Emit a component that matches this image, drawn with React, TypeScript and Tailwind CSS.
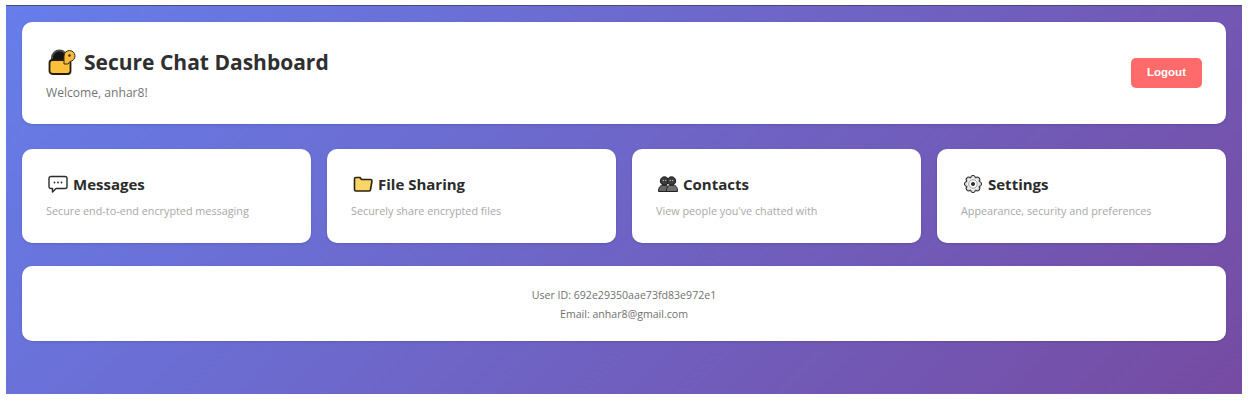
import React from 'react';

function LockIcon() {
  return (
    <svg width="28" height="28" viewBox="0 0 28 28" className="ml-[2px] shrink-0">
      <path d="M4 15V10a7.500 7.500 0 0 1 15 0v5z" fill="#141414" stroke="#4a4a4a" strokeWidth="2" />
      <rect x="1.500" y="12" width="21" height="14" rx="3" fill="#fdc03a" stroke="#241c0c" strokeWidth="1.800" />
      <path d="M16 8a5.500 5.500 0 1 1 6 5.500l-2 2.500h-4z" fill="#f6bb3e" stroke="#3a2c10" strokeWidth="1" strokeLinejoin="round" />
      <circle cx="21.500" cy="7.500" r="1.200" fill="#3a2c10" />
    </svg>
  );
}

function ChatIcon() {
  return (
    <svg width="20" height="20" viewBox="0 0 20 20" fill="none" className="ml-[2px] shrink-0">
      <path d="M3 2.500h14a2 2 0 0 1 2 2v8a2 2 0 0 1-2 2H8l-3.500 3.500V14.500H3a2 2 0 0 1-2-2v-8a2 2 0 0 1 2-2z" fill="#fff" stroke="#2b2b2b" strokeWidth="1.400" strokeLinejoin="round" />
      <circle cx="6.500" cy="8.500" r="0.900" fill="#2b2b2b" />
      <circle cx="10" cy="8.500" r="0.900" fill="#2b2b2b" />
      <circle cx="13.500" cy="8.500" r="0.900" fill="#2b2b2b" />
    </svg>
  );
}

function FolderIcon() {
  return (
    <svg width="20" height="20" viewBox="0 0 20 20" className="ml-[2px] shrink-0">
      <path d="M1.500 15.500V5A1.500 1.500 0 0 1 3 3.500h4L8.500 5.500h9A1.500 1.500 0 0 1 19 7l-1.500 8.500a1.500 1.500 0 0 1-1.500 1.500H3a1.500 1.500 0 0 1-1.500-1.500z" fill="#fbd568" stroke="#2a2210" strokeWidth="1.600" strokeLinejoin="round" />
    </svg>
  );
}

function PeopleIcon() {
  return (
    <svg width="20" height="20" viewBox="0 0 20 20" className="ml-[2px] shrink-0">
      <path d="M0.500 17.500c0-4.500 2-6.500 5.500-6.500s5.500 2 5.500 6.500z" fill="#666" stroke="#222" strokeWidth="1" />
      <path d="M8.500 17.500c0-4.500 1.500-6.500 5.500-6.500s5.500 2 5.500 6.500z" fill="#6e6e6e" stroke="#222" strokeWidth="1" />
      <circle cx="6.500" cy="7" r="4.200" fill="#3b3b3b" stroke="#1c1c1c" strokeWidth="1" />
      <circle cx="13.500" cy="7" r="4.200" fill="#3b3b3b" stroke="#1c1c1c" strokeWidth="1" />
      <circle cx="5.300" cy="6.500" r="0.800" fill="#aaa" />
      <circle cx="7.800" cy="6.500" r="0.800" fill="#aaa" />
      <circle cx="12.200" cy="6.500" r="0.800" fill="#aaa" />
      <circle cx="14.700" cy="6.500" r="0.800" fill="#aaa" />
    </svg>
  );
}

function GearIcon() {
  const teeth = [0, 45, 90, 135, 180, 225, 270, 315];
  return (
    <svg width="20" height="20" viewBox="0 0 20 20" className="ml-[2px] shrink-0">
      {teeth.map((a) => (
        <circle key={a} cx="10" cy="3.800" r="2.400" fill="#d8d8d8" stroke="#2b2b2b" strokeWidth="1" transform={`rotate(${a} 10 10)`} />
      ))}
      <circle cx="10" cy="10" r="6.200" fill="#f4f4f4" />
      <circle cx="10" cy="10" r="4.300" fill="#fff" stroke="#777" strokeWidth="0.700" />
      <circle cx="10" cy="10" r="2" fill="#2b2b2b" />
    </svg>
  );
}

const CARDS = [
  { icon: <ChatIcon />, title: 'Messages', text: 'Secure end-to-end encrypted messaging' },
  { icon: <FolderIcon />, title: 'File Sharing', text: 'Securely share encrypted files' },
  { icon: <PeopleIcon />, title: 'Contacts', text: "View people you've chatted with" },
  { icon: <GearIcon />, title: 'Settings', text: 'Appearance, security and preferences' },
];

export default function App() {
  return (
    <div className="h-[403px] bg-white pl-[6px] pr-[8px] pt-[5px] pb-[9px] font-['Open_Sans','Noto_Sans',sans-serif]">
      <div className="h-full border-t border-[#4a4a78] bg-[linear-gradient(135deg,#667eea_0%,#764ba2_100%)] px-4 pt-4">
        {/* Header */}
        <div className="flex h-[102px] items-center justify-between rounded-[10px] bg-white pl-6 pr-6 shadow-sm">
          <div className="pt-[2px]">
            <h1 className="flex items-center gap-[8px] text-[21px] leading-[30px] font-bold text-[#2f2f2f]">
              <LockIcon />
              Secure Chat Dashboard
            </h1>
            <p className="mt-[7px] text-[12.100px] leading-[18px] text-[#757575]">Welcome, anhar8!</p>
          </div>
          <button className="h-[30px] w-[71px] rounded-[5px] bg-[#ff6b6b] font-['Liberation_Sans',sans-serif] text-[11.500px] font-bold text-white">
            Logout
          </button>
        </div>

        {/* Feature cards */}
        <div className="mt-[25px] grid grid-cols-4 gap-4">
          {CARDS.map((c) => (
            <div key={c.title} className="h-[94px] rounded-[10px] bg-white pl-6 pt-[23px] shadow-sm">
              <h3 className="flex items-center gap-[5px] text-[15px] leading-[24px] font-bold text-[#2b2b2b]">
                {c.icon}
                {c.title}
              </h3>
              <p className="mt-[6px] text-[10.800px] leading-[18px] text-[#a8a8a8]">{c.text}</p>
            </div>
          ))}
        </div>

        {/* Account info */}
        <div className="mt-[23px] flex h-[75px] flex-col items-center justify-center rounded-[10px] bg-white pt-[2px] text-[10.600px] leading-[19px] text-[#707070] shadow-sm">
          <p>User ID: 692e29350aae73fd83e972e1</p>
          <p>Email: anhar8@gmail.com</p>
        </div>
      </div>
    </div>
  );
}
